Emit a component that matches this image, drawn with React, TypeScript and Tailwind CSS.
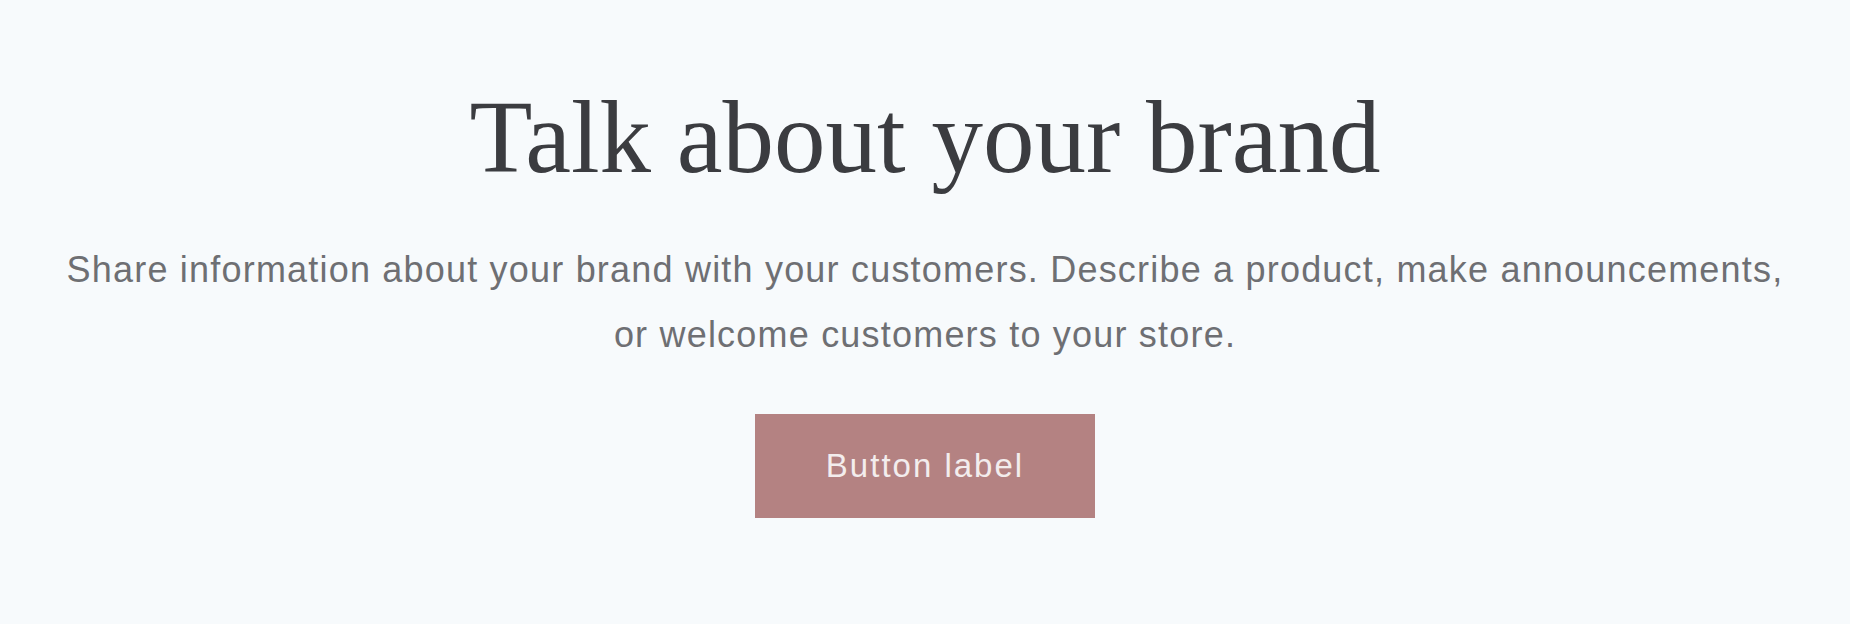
export default function App() {
  return (
    <section className="w-full h-[624px] bg-[#f7fafc] flex flex-col items-center pt-[86px]">
      <h1 className="font-['Liberation_Serif',serif] text-[103px] leading-[103px] text-[#3b3c40] text-center">
        Talk about your brand
      </h1>
      <p className="mt-[48px] max-w-[1800px] text-center font-['Liberation_Sans',Arial,sans-serif] text-[36px] leading-[65px] tracking-[1.2px] text-[#6e6f73]">
        Share information about your brand with your customers. Describe a product, make announcements,
        <br />
        or welcome customers to your store.
      </p>
      <button className="mt-[47px] w-[340px] h-[104px] bg-[#b48282] text-[#f3eded] font-['Liberation_Sans',Arial,sans-serif] text-[33px] tracking-[2px] flex items-center justify-center">
        Button label
      </button>
    </section>
  );
}
